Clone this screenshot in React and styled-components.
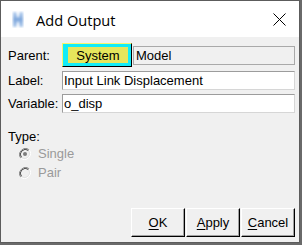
import React from "react";
import styled, { createGlobalStyle } from "styled-components";

const GlobalStyle = createGlobalStyle`
  html, body {
    margin: 0;
    padding: 0;
    background: #6a6a6a;
  }
  body {
    font-family: "Liberation Sans", Arial, sans-serif;
    font-size: 13px;
    color: #000;
  }
`;

const AppIcon = () => (
  <svg width="12" height="17" viewBox="0 0 12 17">
    <defs>
      <linearGradient id="hw" x1="0" y1="0" x2="0" y2="1">
        <stop offset="0" stopColor="#b9d2f0" />
        <stop offset="0.5" stopColor="#7fa7dc" />
        <stop offset="1" stopColor="#b0cbec" />
      </linearGradient>
      <filter id="soft" x="-30%" y="-30%" width="160%" height="160%">
        <feGaussianBlur stdDeviation="0.8" />
      </filter>
    </defs>
    <path
      d="M1 1 L4.5 1 Q5 6 6 7 Q7 6 7.5 1 L11 1 L11 16 L7.5 16 Q7 11 6 10 Q5 11 4.5 16 L1 16 Z"
      fill="url(#hw)"
      filter="url(#soft)"
    />
  </svg>
);

const CloseIcon = () => (
  <svg width="13" height="13" viewBox="0 0 13 13">
    <path d="M0.5 0.5 L12.5 12.5 M12.5 0.5 L0.5 12.5" stroke="#000" strokeWidth="1" />
  </svg>
);

const Radio = ({ checked }) => (
  <svg width="12" height="12" viewBox="0 0 12 12">
    <path d="M10.2 1.8 A6 6 0 0 0 1.8 10.2" stroke="#8a8a8a" strokeWidth="1" fill="none" />
    <path d="M1.8 10.2 A6 6 0 0 0 10.2 1.8" stroke="#ffffff" strokeWidth="1" fill="none" />
    <path d="M9.5 2.5 A5 5 0 0 0 2.5 9.5" stroke="#3c3c3c" strokeWidth="1" fill="none" />
    <path d="M2.5 9.5 A5 5 0 0 0 9.5 2.5" stroke="#e3e3e3" strokeWidth="1" fill="none" />
    <circle cx="6" cy="6" r="3.6" fill="#f0f0f0" />
    {checked && <circle cx="6" cy="6" r="2" fill="#7d7d7d" />}
  </svg>
);

const App = () => {
  return (
    <>
      <GlobalStyle />
      <Window>
        {/* title bar */}
        <TitleBar>
          <IconBox>
            <AppIcon />
          </IconBox>
          <Title>Add Output</Title>
          <Close>
            <CloseIcon />
          </Close>
        </TitleBar>
        {/* body */}
        <Body>
          <ParentRow>
            <FieldLabel>Parent:</FieldLabel>
            <SystemButton>
              <SystemFace>System</SystemFace>
            </SystemButton>
            <ModelField>Model</ModelField>
          </ParentRow>
          <Row>
            <FieldLabel>Label:</FieldLabel>
            <TextField>Input Link Displacement</TextField>
          </Row>
          <Row>
            <FieldLabel>Variable:</FieldLabel>
            <TextField>o_disp</TextField>
          </Row>
          <TypeLabel>Type:</TypeLabel>
          <RadioRow>
            <Radio checked />
            <RadioText>Single</RadioText>
          </RadioRow>
          <RadioRow>
            <Radio />
            <RadioText>Pair</RadioText>
          </RadioRow>
          <Buttons>
            <Button>
              <u>O</u>K
            </Button>
            <Button>
              <u>A</u>pply
            </Button>
            <Button>
              <u>C</u>ancel
            </Button>
          </Buttons>
        </Body>
      </Window>
    </>
  );
};

export default App;

const Window = styled.div`
  box-sizing: border-box;
  width: 300px;
  height: 243px;
  border: 1px solid #5c5c5c;
  display: flex;
  flex-direction: column;
  background: #f0f0f0;
`;

const TitleBar = styled.div`
  height: 36px;
  background: #fff;
  display: flex;
  align-items: center;
  padding-left: 11px;
`;

const IconBox = styled.div`
  display: flex;
  width: 12px;
  height: 17px;
  margin-top: 1px;
`;

const Title = styled.span`
  font-family: "Open Sans", "Noto Sans", sans-serif;
  font-size: 14.6px;
  color: #000;
  margin-left: 12px;
  margin-top: 1px;
`;

const Close = styled.div`
  margin-left: auto;
  margin-right: 13px;
  display: flex;
  margin-top: 1px;
`;

const Body = styled.div`
  flex: 1;
  display: flex;
  flex-direction: column;
  padding: 6px 4px 5px 7px;
`;

const Row = styled.div`
  display: flex;
  align-items: center;
  height: 19px;
  margin-top: 4px;
`;

const ParentRow = styled.div`
  display: flex;
  align-items: center;
  height: 24px;
`;

const FieldLabel = styled.span`
  width: 54px;
  flex-shrink: 0;
  white-space: nowrap;
`;

const SystemButton = styled.div`
  box-sizing: border-box;
  width: 70px;
  height: 24px;
  display: flex;
  background: #12ecf8;
  border-style: solid;
  border-width: 1px;
  border-color: #f7f76e #000 #000 #f7f76e;
  padding: 3px 3px 3px 5px;
`;

const SystemFace = styled.div`
  flex: 1;
  background: #e6e65c;
  display: flex;
  align-items: center;
  justify-content: center;
`;

const ModelField = styled.div`
  box-sizing: border-box;
  flex: 1;
  height: 19px;
  margin-left: 1px;
  border: 1px solid #a9a9a9;
  display: flex;
  align-items: center;
  padding-left: 2px;
`;

const TextField = styled.div`
  box-sizing: border-box;
  flex: 1;
  height: 19px;
  background: #fff;
  border-style: solid;
  border-width: 1px;
  border-color: #9c9c9c #d6d6d6 #d6d6d6 #9c9c9c;
  display: flex;
  align-items: center;
  padding-left: 1px;
`;

const TypeLabel = styled.div`
  margin-top: 16px;
  line-height: 15px;
`;

const RadioRow = styled.div`
  display: flex;
  align-items: center;
  height: 19px;
  padding-left: 11px;
  gap: 7px;
  &:first-of-type {
    margin-top: 2px;
  }
`;

const RadioText = styled.span`
  color: #9a9a9a;
`;

const Buttons = styled.div`
  margin-top: auto;
  display: flex;
  justify-content: flex-end;
  gap: 1px;
`;

const Button = styled.div`
  box-sizing: border-box;
  width: 54px;
  height: 29px;
  display: flex;
  align-items: center;
  justify-content: center;
  border-style: solid;
  border-width: 1px;
  border-color: #fff #000 #000 #fff;
  box-shadow: inset -1px -1px 0 #a0a0a0;
  background: #f0f0f0;
  u {
    text-decoration-thickness: 1px;
    text-underline-offset: 2px;
  }
`;
